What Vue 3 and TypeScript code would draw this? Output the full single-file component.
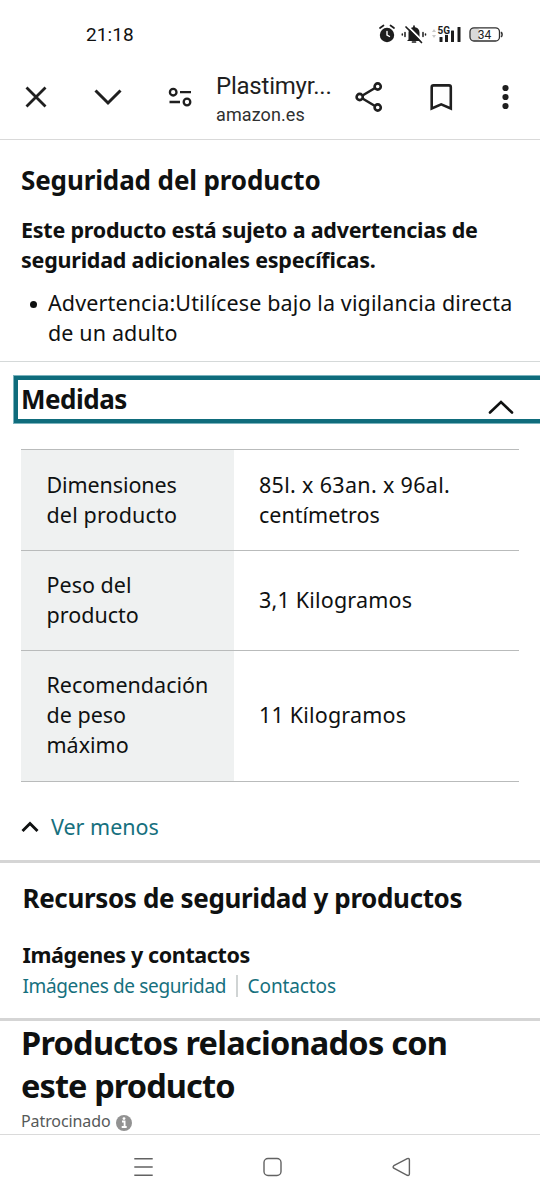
<script setup lang="ts">
interface Measure {
  label: { text: string; cls: string }[]
  value: { text: string; cls: string }[]
}

const measures: Measure[] = [
  {
    label: [{ text: 'Dimensiones', cls: 'a1' }, { text: 'del producto', cls: 'a2' }],
    value: [{ text: '85l. x 63an. x 96al.', cls: 'a3' }, { text: 'centímetros', cls: 'a4' }],
  },
  {
    label: [{ text: 'Peso del', cls: 'b1' }, { text: 'producto', cls: 'b2' }],
    value: [{ text: '3,1 Kilogramos', cls: 'b3' }],
  },
  {
    label: [{ text: 'Recomendación', cls: 'c1' }, { text: 'de peso', cls: 'c2' }, { text: 'máximo', cls: 'c3' }],
    value: [{ text: '11 Kilogramos', cls: 'c4' }],
  },
]
</script>

<template>
  <div class="screen">
    <header class="status">
      <span class="clock">21:18</span>
      <svg class="status-icons" width="130" height="24" viewBox="0 0 130 24">
        <g fill="none" stroke="#1d1d1d" stroke-width="1.7" stroke-linecap="round">
          <circle cx="9" cy="13" r="7.2" fill="#1d1d1d" stroke="none" />
          <path d="M2 6 5.5 3.5M12.5 3.5 16 6" />
          <path d="M9 9.500v3.500l2.500 1.500" stroke="#fff" stroke-width="1.4" />
          <path d="M30.500 17.500V10.500a5.500 5.500 0 0 1 11 0V17.500l1.500 1.500h-14Z" fill="#1d1d1d" stroke="none" />
          <path d="M34.500 20h3M36 4v2" />
          <path d="m29 3.500 16 16" stroke="#fff" stroke-width="1.800" />
          <path d="m28 5 15.500 15.500" />
          <path d="M27 10.500v4M24.300 12v1M45 10.500v4M47.500 12v1" stroke-width="1.500" />
        </g>
        <path d="m54 10 2-3 2 3ZM54 13l2 3 2-3Z" fill="#c9c9c9" />
        <g fill="#1d1d1d">
          <rect x="61.500" y="15" width="3" height="5" rx=".5" />
          <rect x="67" y="12.500" width="3" height="7.500" rx=".5" />
          <rect x="73" y="8.500" width="3" height="11.500" rx=".5" />
          <rect x="79.500" y="5" width="3" height="15" rx=".5" />
        </g>
        <text class="net" x="59.500" y="11.500">5G</text>
        <rect x="92.500" y="6" width="9" height="13" rx="3" fill="#d9d9d9" />
        <rect x="92" y="5.800" width="29.500" height="13.200" rx="4" fill="none" stroke="#303030" stroke-width="1.300" />
        <path d="M123.200 10q1.800 2.500 0 5" fill="none" stroke="#303030" stroke-width="1.500" />
        <text class="batt" x="99.700" y="16.800">34</text>
      </svg>
    </header>

    <nav class="toolbar">
      <svg class="left-icons" width="216" height="60" viewBox="0 0 216 60" fill="none" stroke="#1f1f1f">
        <path d="m26.500 20.500 19 19m0-19-19 19" stroke-width="2.800" />
        <path d="m95.500 23.500 12.500 12.500 12.500-12.500" stroke-width="3" />
        <g stroke-width="2.300">
          <circle cx="173.200" cy="25.200" r="3.300" />
          <path d="M180 25.200h11M169.500 35h10.500" />
          <circle cx="187" cy="35" r="3.300" />
        </g>
      </svg>
      <div class="site">
        <span class="site-title">Plastimyr...</span>
        <span class="site-host">amazon.es</span>
      </div>
      <svg class="right-icons" width="190" height="60" viewBox="0 0 190 60" fill="none" stroke="#1f1f1f">
        <g stroke-width="2.600">
          <path d="m10 30 17.500-10.500M10 30l17.500 10.500" />
          <g fill="#fff">
            <circle cx="9.700" cy="30" r="3.100" />
            <circle cx="27.700" cy="19.500" r="3.100" />
            <circle cx="27.700" cy="40.500" r="3.100" />
          </g>
        </g>
        <path d="M81.700 41.500V20.200q0-1.800 1.800-1.800h15.500q1.800 0 1.800 1.800v21.300L91.200 37.300Z" stroke-width="2.600" />
        <g fill="#1f1f1f" stroke="none">
          <circle cx="155.500" cy="21" r="3.100" />
          <circle cx="155.500" cy="30" r="3.100" />
          <circle cx="155.500" cy="39" r="3.100" />
        </g>
      </svg>
    </nav>

    <main>
      <section class="safety">
        <h2><span class="h-safety">Seguridad del producto</span></h2>
        <p class="warn">
          <span>Este producto está sujeto a advertencias de</span>
          <span>seguridad adicionales específicas.</span>
        </p>
        <ul>
          <li>
            <span>Advertencia:Utilícese bajo la vigilancia directa</span>
            <span>de un adulto</span>
          </li>
        </ul>
      </section>

      <section class="measures">
        <div class="accordion">
          <h2><span class="h-measures">Medidas</span></h2>
          <svg class="collapse" width="28" height="18" viewBox="0 0 28 18">
            <path d="M3 14.500 14 4l11 10.500" fill="none" stroke="#0f1111" stroke-width="2.600" stroke-linecap="round" />
          </svg>
        </div>
        <div class="table">
          <div v-for="(m, i) in measures" :key="i" class="row">
            <div class="label">
              <span v-for="t in m.label" :key="t.text" :class="t.cls">{{ t.text }}</span>
            </div>
            <div class="value">
              <span v-for="t in m.value" :key="t.text" :class="t.cls">{{ t.text }}</span>
            </div>
          </div>
        </div>
        <a class="less">
          <svg width="18" height="14" viewBox="0 0 18 14">
            <path d="m1.500 11 7.500-7.500 7.500 7.500" fill="none" stroke="#0f1111" stroke-width="2.900" />
          </svg>
          <span>Ver menos</span>
        </a>
      </section>

      <section class="resources">
        <h2><span class="h-res">Recursos de seguridad y productos</span></h2>
        <h3><span>Imágenes y contactos</span></h3>
        <div class="links">
          <a class="k1">Imágenes de seguridad</a>
          <i></i>
          <a class="k2">Contactos</a>
        </div>
      </section>

      <section class="related">
        <h1>
          <span>Productos relacionados con</span>
          <span class="r2">este producto</span>
        </h1>
        <div class="sponsored">
          <span>Patrocinado</span>
          <svg width="16" height="16" viewBox="0 0 16 16">
            <circle cx="8" cy="8" r="8" fill="#929292" />
            <path d="M6 6.500h2.600v5M5.700 12h5" fill="none" stroke="#fff" stroke-width="1.800" />
            <circle cx="8" cy="3.600" r="1.400" fill="#fff" />
          </svg>
        </div>
      </section>
    </main>

    <footer class="sysnav">
      <svg width="540" height="65" viewBox="0 0 540 65" fill="none" stroke="#626262" stroke-width="1.400">
        <path d="M134.300 23.700h18.400M134.300 32h18.400M134.300 40.300h18.400" stroke-width="1.600" />
        <rect x="264" y="23.500" width="17" height="17" rx="4" />
        <path d="m393.800 30.700 13.400-7.100q2.200-.6 2.200 1.500v13.700q0 2.100-2.200 1.500l-13.400-7.100q-1.400-1.200 0-2.500Z" />
      </svg>
    </footer>
  </div>
</template>

<style>
body {
  margin: 0;
  background: #fff;
}
</style>

<style scoped>
.screen {
  width: 540px;
  height: 1200px;
  overflow: hidden;
  display: flex;
  flex-direction: column;
  background: #fff;
  color: #0f1111;
  font: 21.5px/30px "Noto Sans", sans-serif;
}
.screen span {
  white-space: nowrap;
}
h1, h2, h3, p, ul {
  margin: 0;
  padding: 0;
}
h2 {
  font-size: 26px;
  line-height: 36px;
}
h2 span, h3 span {
  display: block;
}
.h-safety {
  letter-spacing: -0.12px;
}
.h-measures {
  padding-top: 1px;
  letter-spacing: -0.5px;
}
.h-res {
  letter-spacing: -0.36px;
}
.status {
  height: 67px;
  box-sizing: border-box;
  padding: 22px 0 0 86px;
  display: flex;
  justify-content: space-between;
}
.clock {
  font: 19px/26px Roboto, sans-serif;
  letter-spacing: 0.1px;
  color: #111;
}
.status-icons {
  margin-right: 32px;
}
.net {
  font: bold 10px Roboto, sans-serif;
  fill: #1d1d1d;
  stroke: #fff;
  stroke-width: 1.5px;
  paint-order: stroke;
}
.batt {
  font: 12px Roboto, sans-serif;
  fill: #222;
}
.toolbar {
  height: 73px;
  box-sizing: border-box;
  border-bottom: 1px solid #d9d9d9;
  display: flex;
}
.site {
  width: 134px;
  display: flex;
  flex-direction: column;
  font-family: Roboto, sans-serif;
  color: #1f1f1f;
  padding-top: 5px;
}
.site-title {
  font-size: 24px;
  line-height: 29px;
  letter-spacing: -0.22px;
}
.site-host {
  font-size: 18px;
  line-height: 28px;
  letter-spacing: 0.1px;
  color: #303030;
}
.safety {
  height: 222px;
  box-sizing: border-box;
  padding: 22px 21px 0;
  border-bottom: 1px solid #d5d9d9;
}
.warn {
  margin-top: 17px;
  font-weight: 700;
  letter-spacing: -0.23px;
}
.warn span, li span {
  display: block;
}
ul {
  margin-top: 13px;
  list-style: none;
}
li {
  display: grid;
  grid-template-columns: 27px 1fr;
  letter-spacing: 0.13px;
}
li::before {
  content: "";
  width: 7px;
  height: 7px;
  margin: 13px 0 0 9px;
  border-radius: 50%;
  background: #0f1111;
}
li span {
  grid-column: 2;
}
.measures {
  height: 501px;
  box-sizing: border-box;
  padding-top: 14px;
  border-bottom: 3px solid #d5d5d5;
}
.accordion {
  height: 47px;
  box-sizing: border-box;
  margin-left: 14px;
  border: 4px solid #0f6c7c;
  border-right: 0;
  box-shadow: 0 0 0 1px #7bb3bd;
  padding: 0 25px 0 3px;
  display: flex;
  justify-content: space-between;
}
.collapse {
  margin-top: 17.5px;
}
.table {
  margin: 26px 21px 0;
  border-bottom: 1px solid #b9bbbb;
}
.row {
  display: grid;
  grid-template-columns: 212.5px 1fr;
  border-top: 1px solid #b9bbbb;
}
.label, .value {
  padding: 19.5px 0 20.2px 25.5px;
  display: flex;
  flex-direction: column;
  justify-content: center;
}
.label {
  background: #eff1f1;
}
.row:last-child .label, .row:last-child .value {
  padding-top: 19px;
  padding-bottom: 20.7px;
}
.a1 {
  letter-spacing: -0.1px;
}
.a2 {
  letter-spacing: 0.15px;
}
.a3 {
  letter-spacing: 0.32px;
}
.b3, .c4 {
  letter-spacing: 0.19px;
}
.less {
  margin: 30px 0 0 21px;
  display: flex;
  align-items: center;
  gap: 12px;
  color: #16707e;
}
.resources {
  height: 158px;
  box-sizing: border-box;
  padding: 17px 22.5px 0;
  border-bottom: 3px solid #d5d5d5;
}
h3 {
  margin-top: 23.5px;
  font-size: 21.5px;
  line-height: 30px;
  letter-spacing: -0.38px;
}
.links {
  margin-top: 2.5px;
  display: flex;
  align-items: center;
  font-size: 19px;
  line-height: 28px;
  color: #16707e;
}
.links a {
  white-space: nowrap;
}
.k1 {
  letter-spacing: -0.36px;
}
.k2 {
  letter-spacing: -0.1px;
}
.links i {
  width: 1.5px;
  height: 22px;
  margin: 0 10px;
  background: #d0d4d4;
}
.related {
  padding: 0 21px;
  height: 113px;
}
h1 {
  font-size: 32.5px;
  line-height: 43px;
  letter-spacing: -0.75px;
}
h1 span {
  display: block;
}
.r2 {
  letter-spacing: -0.9px;
}
.sponsored {
  display: flex;
  align-items: center;
  gap: 5px;
  margin-top: 3px;
  font-size: 16px;
  line-height: 22px;
  letter-spacing: -0.1px;
  color: #565959;
}
.sponsored svg {
  margin-top: 3px;
}
.sysnav {
  height: 66px;
  box-sizing: border-box;
  border-top: 1px solid #dadada;
}
</style>
